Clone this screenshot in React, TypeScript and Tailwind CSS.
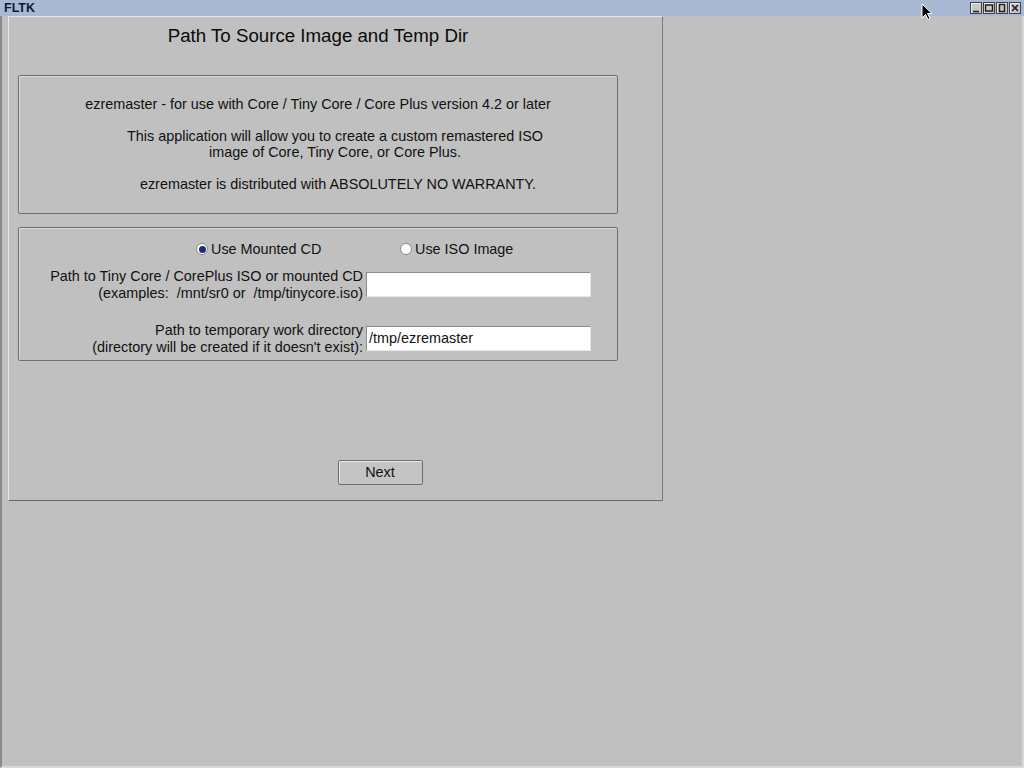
import React from "react";

function WinButton({ kind }: { kind: "min" | "max" | "restore" | "close" }) {
  return (
    <div className="flex h-[12px] w-[12px] items-center justify-center border border-[#404040] bg-[#c8c8c8] shadow-[inset_1px_1px_0_#f0f0f0]">
      <svg width="10" height="10" viewBox="0 0 10 10">
        {kind === "min" && <path d="M2 8.5h6" stroke="#202020" strokeWidth="1.5" />}
        {kind === "max" && <rect x="1.5" y="2" width="7" height="6" fill="none" stroke="#202020" strokeWidth="1.5" />}
        {kind === "restore" && <rect x="2.5" y="1.5" width="5" height="7" fill="none" stroke="#202020" strokeWidth="1.5" />}
        {kind === "close" && <path d="M2 2l6 6M8 2l-6 6" stroke="#202020" strokeWidth="1.6" />}
      </svg>
    </div>
  );
}

function Radio({ checked, label }: { checked?: boolean; label: string }) {
  return (
    <div className="flex items-center">
      <span className="flex h-[12px] w-[12px] items-center justify-center rounded-full border border-[#8a8a8a] bg-white">
        {checked && <span className="h-[7px] w-[7px] rounded-full bg-[#1c2a78]" />}
      </span>
      <span className="ml-[3px] text-[14.4px] leading-[16px] text-[#111]">{label}</span>
    </div>
  );
}

function Field({ lines, value }: { lines: [string, string]; value?: string }) {
  return (
    <div className="flex items-center">
      <div className="w-[344px] whitespace-pre text-right text-[14.4px] leading-[16.5px] text-[#111]">
        <div>{lines[0]}</div>
        <div>{lines[1]}</div>
      </div>
      <div className="ml-[3px] flex h-[25px] w-[225px] items-center border border-t-[#8c8c8c] border-l-[#8c8c8c] border-r-[#e8e8e8] border-b-[#e8e8e8] bg-white pl-[2px] text-[14.4px] text-[#111]">
        {value}
      </div>
    </div>
  );
}

export default function App() {
  return (
    <div
      className="relative flex h-[768px] w-[1024px] flex-col overflow-hidden bg-[#c0c0c0]"
      style={{ fontFamily: '"Liberation Sans", Arial, sans-serif' }}
    >
      {/* title bar */}
      <div className="flex h-[16px] items-center justify-between bg-[#a9b9d3] pl-[4px] pr-[3px]">
        <span className="text-[12.5px] font-bold leading-none text-[#0c1838]">FLTK</span>
        <div className="flex gap-[1px]">
          <WinButton kind="min" />
          <WinButton kind="max" />
          <WinButton kind="restore" />
          <WinButton kind="close" />
        </div>
      </div>

      {/* window body */}
      <div className="flex flex-1 border-l-2 border-r-2 border-b-2 border-l-[#8a8a8a] border-r-[#d8d8d8] border-b-[#d8d8d8] pl-[6px]">
        <div className="flex h-[485px] w-[655px] flex-col border border-t-[#e6e6e6] border-l-[#e6e6e6] border-r-[#7a7a7a] border-b-[#6a6a6a] px-[9px]">
          <h1 className="mt-[8px] pr-[35px] text-center text-[18.7px] leading-[21px] text-[#0a0a0a]">
            Path To Source Image and Temp Dir
          </h1>

          {/* info box */}
          <div className="mt-[29px] flex h-[139px] w-[600px] flex-col rounded-[2px] border border-[#6e6e6e] pt-[20px] text-[14.4px] leading-[16.5px] text-[#111] shadow-[inset_1px_1px_0_#dadada]">
            <p className="text-center">
              ezremaster - for use with Core / Tiny Core / Core Plus version 4.2 or later
            </p>
            <p className="mt-[15px] pl-[34px] text-center">
              This application will allow you to create a custom remastered ISO
              <br />
              image of Core, Tiny Core, or Core Plus.
            </p>
            <p className="mt-[15px] pl-[40px] text-center">
              ezremaster is distributed with ABSOLUTELY NO WARRANTY.
            </p>
          </div>

          {/* paths box */}
          <div className="mt-[13px] flex h-[134px] w-[600px] flex-col rounded-[2px] border border-[#6e6e6e] pt-[13px] shadow-[inset_1px_1px_0_#dadada]">
            <div className="flex pl-[177px]">
              <div className="w-[204px]">
                <Radio checked label="Use Mounted CD" />
              </div>
              <Radio label="Use ISO Image" />
            </div>
            <div className="mt-[11px]">
              <Field lines={["Path to Tiny Core / CorePlus ISO or mounted CD", "(examples:  /mnt/sr0 or  /tmp/tinycore.iso)"]} />
            </div>
            <div className="mt-[21px]">
              <Field
                lines={["Path to temporary work directory", "(directory will be created if it doesn't exist):"]}
                value="/tmp/ezremaster"
              />
            </div>
          </div>

          <div className="mt-[99px] flex justify-center pl-[89px]">
            <button className="h-[25px] w-[85px] rounded-[2px] border border-[#6e6e6e] bg-[#c4c4c4] text-[14.4px] text-[#111] shadow-[inset_1px_1px_0_#e8e8e8]">
              Next
            </button>
          </div>
        </div>
      </div>

      {/* mouse pointer */}
      <svg className="absolute left-[921px] top-[3px]" width="12" height="18" viewBox="0 0 12 18">
        <path d="M1 1v14l3.5-3.5 2.5 5 2-1-2.5-5H11z" fill="#000" stroke="#fff" strokeWidth="1" />
      </svg>
    </div>
  );
}
